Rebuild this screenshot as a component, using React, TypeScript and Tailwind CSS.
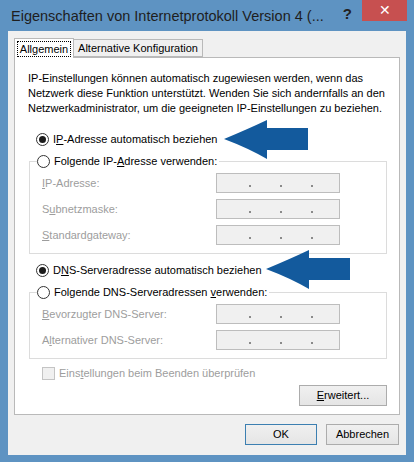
import React from "react";

const font = "font-['Liberation_Sans',Arial,sans-serif]";

function Radio({ checked, children }: { checked?: boolean; children: React.ReactNode }) {
  return (
    <div className="flex items-center h-[22px] gap-[4px] text-[11px] text-black">
      <span className="w-[13px] h-[13px] rounded-full border border-[#333] bg-white flex items-center justify-center">
        {checked && <span className="w-[7px] h-[7px] rounded-full bg-[#1c1c1c]" />}
      </span>
      <span className="leading-none">{children}</span>
    </div>
  );
}

function IpField({ label }: { label: React.ReactNode }) {
  return (
    <div className="flex items-center h-[26px]">
      <span className="w-[174px] text-[11px] text-[#9d9d9d]">{label}</span>
      <div className="w-[124px] h-[20px] bg-[#f0f0f0] border border-[#bdbdbd] flex items-end pb-[5px] pl-[32px] gap-[29px]">
        <span className="w-[2px] h-[2px] bg-[#8a8a8a]" />
        <span className="w-[2px] h-[2px] bg-[#8a8a8a]" />
        <span className="w-[2px] h-[2px] bg-[#8a8a8a]" />
      </div>
    </div>
  );
}

function Group({ legend, children }: { legend: React.ReactNode; children: React.ReactNode }) {
  return (
    <fieldset className="border border-[#dcdcdc] ml-[1px] mr-[12px] px-0 pb-[5px]">
      <legend className="ml-[7px] pr-[2px]">{legend}</legend>
      <div className="-mt-[2px] pl-[12px]">{children}</div>
    </fieldset>
  );
}

function Arrow({ className }: { className: string }) {
  return (
    <svg className={`absolute ${className}`} viewBox="0 0 84 40" width="84" height="40">
      <path d="M0 19 Q24 9 43 0 L43 8 L84 8 L84 30 L43 30 L43 39 Q24 28 0 19 Z" fill="#135a9d" />
    </svg>
  );
}

export default function App() {
  return (
    <div className={`relative w-[414px] h-[462px] bg-[#5e93c2] flex flex-col ${font}`}>
      {/* title bar */}
      <div className="h-[31px] flex items-start">
        <div className="pl-[11px] pt-[6px] text-[14.5px] text-[#1e1e1e] flex-1 whitespace-nowrap">
          Eigenschaften von Internetprotokoll Version 4 (...
        </div>
        <div className="pt-[3px] pr-[10px] text-[15px] font-bold text-[#222]">?</div>
        <div className="w-[45px] h-[21px] mr-[7px] bg-[#c75050] flex items-center justify-center text-white text-[14px]">
          ✕
        </div>
      </div>

      {/* client area */}
      <div className="mx-[8px] mb-[7px] flex-1 bg-[#f0f0f0] flex flex-col">
        <div className="flex items-end pl-[6px] pt-[7px] text-[11px]">
          <div className="relative z-10 -mb-px h-[20px] w-[60px] bg-white border border-b-0 border-[#b9b9b9] flex items-center justify-center">
            <span className="border border-dotted border-black px-[2px] leading-[14px]">Allgemein</span>
          </div>
          <div className="h-[18px] w-[129px] border border-l-0 border-[#b9b9b9] bg-[#f0f0f0] flex items-center justify-center">
            Alternative Konfiguration
          </div>
        </div>

        <div className="mx-[6px] h-[358px] bg-white border border-[#b9b9b9] pl-[13px] pt-[13px]">
          <p className="text-[11px] leading-[15px] text-black">
            IP-Einstellungen können automatisch zugewiesen werden, wenn das
            <br />
            Netzwerk diese Funktion unterstützt. Wenden Sie sich andernfalls an den
            <br />
            Netzwerkadministrator, um die geeigneten IP-Einstellungen zu beziehen.
          </p>

          <div className="mt-[12px] pl-[8px]">
            <Radio checked>
              I<u>P</u>-Adresse automatisch beziehen
            </Radio>
          </div>
          <Group
            legend={
              <Radio>
                Folgende IP-<u>A</u>dresse verwenden:
              </Radio>
            }
          >
            <IpField label={<><u>I</u>P-Adresse:</>} />
            <IpField label={<>S<u>u</u>bnetzmaske:</>} />
            <IpField label={<><u>S</u>tandardgateway:</>} />
          </Group>

          <div className="mt-[5px] pl-[8px]">
            <Radio checked>
              D<u>N</u>S-Serveradresse automatisch beziehen
            </Radio>
          </div>
          <Group
            legend={
              <Radio>
                Folgende DNS-Serveradressen <u>v</u>erwenden:
              </Radio>
            }
          >
            <IpField label={<><u>B</u>evorzugter DNS-Server:</>} />
            <IpField label={<>A<u>l</u>ternativer DNS-Server:</>} />
          </Group>

          <div className="flex items-center h-[28px] pl-[14px] gap-[4px] text-[11px] text-[#9d9d9d]">
            <span className="w-[13px] h-[13px] border border-[#c4c4c4] bg-[#f0f0f0]" />
            <span>
              Eins<u>t</u>ellungen beim Beenden überprüfen
            </span>
          </div>

          <div className="flex justify-end pr-[12px] mt-[-2px]">
            <button className="w-[88px] h-[21px] border border-[#acacac] bg-gradient-to-b from-[#f0f0f0] to-[#e5e5e5] text-[11px] text-black">
              <u>E</u>rweitert...
            </button>
          </div>
        </div>

        <div className="flex justify-end gap-[9px] pr-[7px] pt-[9px]">
          <button className="w-[72px] h-[21px] border border-[#3c7fb1] bg-gradient-to-b from-[#f0f0f0] to-[#e5e5e5] text-[11px] text-black">
            OK
          </button>
          <button className="w-[73px] h-[21px] border border-[#acacac] bg-gradient-to-b from-[#f0f0f0] to-[#e5e5e5] text-[11px] text-black">
            Abbrechen
          </button>
        </div>
      </div>

      <Arrow className="left-[224px] top-[120px]" />
      <Arrow className="left-[266px] top-[250px]" />
    </div>
  );
}
